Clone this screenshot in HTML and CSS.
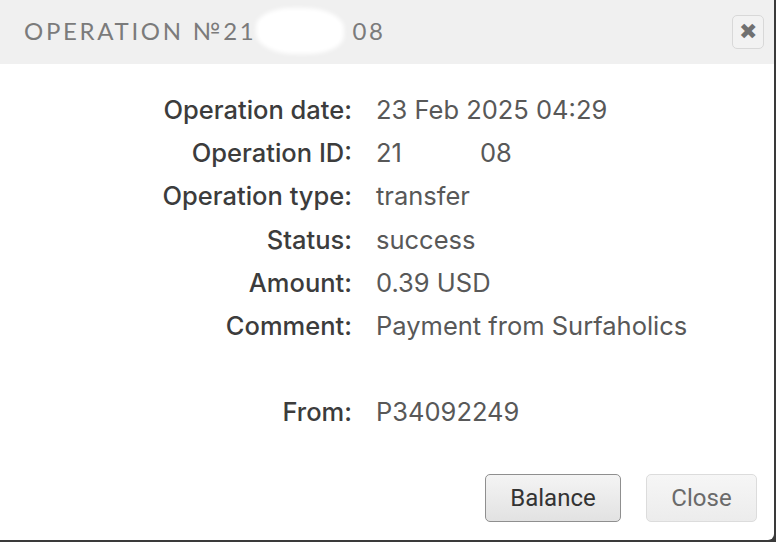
FILE: index.html
```html
<!DOCTYPE html>
<html>
<head>
<meta charset="utf-8">
<link rel="stylesheet" href="styles.css">
</head>
<body>
<div class="dialog">
  <div class="header">
    <div class="title">OPERATION №21<span class="blob"></span>08</div>
    <button class="x-btn" aria-label="close">✖</button>
  </div>
  <div class="content">
    <div class="grid">
      <div class="label">Operation date:</div><div class="value">23 Feb 2025 04:29</div>
      <div class="label">Operation ID:</div><div class="value">21<span class="gap"></span>08</div>
      <div class="label">Operation type:</div><div class="value">transfer</div>
      <div class="label">Status:</div><div class="value">success</div>
      <div class="label">Amount:</div><div class="value">0.39 USD</div>
      <div class="label">Comment:</div><div class="value">Payment from Surfaholics</div>
      <div class="label empty"></div><div class="value empty"></div>
      <div class="label">From:</div><div class="value">P34092249</div>
    </div>
  </div>
  <div class="footer">
    <button class="btn btn-primary">Balance</button>
    <button class="btn btn-light">Close</button>
  </div>
</div>
</body>
</html>
```
FILE: styles.css
```css
html, body {
  margin: 0;
  padding: 0;
  background: #3a3a3a;
}
.dialog {
  width: 774px;
  height: 540px;
  background: #ffffff;
  border-radius: 0 0 6px 0;
  overflow: hidden;
  display: flex;
  flex-direction: column;
}
.header {
  height: 64px;
  background: #f0f0f0;
  display: flex;
  align-items: center;
  justify-content: space-between;
  padding: 0 10px 0 24px;
  box-sizing: border-box;
}
.title {
  font-family: "Lato", "Liberation Sans", sans-serif;
  font-size: 24px;
  color: #7b7b7b;
  letter-spacing: 2.7px;
  display: flex;
  align-items: center;
  margin-top: -3px;
}
.blob {
  display: inline-block;
  width: 88px;
  height: 46px;
  margin: 0 8px 0 0;
  background: #ffffff;
  border-radius: 40% 45% 40% 45%;
  filter: blur(2px);
}
.x-btn {
  width: 32px;
  height: 34px;
  border: 1px solid #d8d8d8;
  border-radius: 5px;
  background: #f2f2f2;
  color: #707070;
  font-size: 22px;
  padding: 0;
  line-height: 1;
  margin-top: 0;
}
.content {
  flex: 1;
  padding-top: 24px;
}
.grid {
  display: grid;
  grid-template-columns: 352px auto;
  column-gap: 24px;
  grid-auto-rows: 43.2px;
  align-items: center;
  font-family: "Inter", "Open Sans", sans-serif;
  font-size: 25.5px;
}
.label {
  text-align: right;
  color: #3c3c3c;
  font-weight: 500;
}
.value {
  color: #585858;
  font-weight: 400;
}
.gap {
  display: inline-block;
  width: 78px;
}
.footer {
  display: flex;
  justify-content: flex-end;
  gap: 25px;
  padding: 0 17px 18px 0;
}
.btn {
  height: 48px;
  font-family: "Roboto", sans-serif;
  font-size: 24px;
  border-radius: 5px;
  padding: 0;
}
.btn-primary {
  width: 136px;
  color: #333;
  border: 1px solid #8f8f8f;
  background: linear-gradient(#f4f4f4, #e2e2e2);
}
.btn-light {
  width: 111px;
  color: #6a6a6a;
  border: 1px solid #dcdcdc;
  background: linear-gradient(#f6f6f6, #ececec);
}
```
